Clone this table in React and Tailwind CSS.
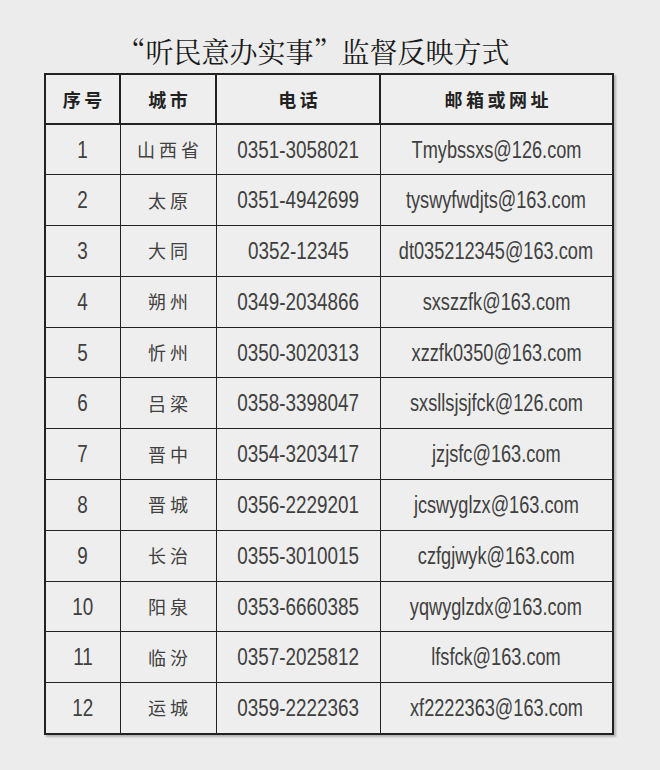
import React from "react";

const rows = [
  ["1", "山西省", "0351-3058021", "Tmybssxs@126.com"],
  ["2", "太原", "0351-4942699", "tyswyfwdjts@163.com"],
  ["3", "大同", "0352-12345", "dt035212345@163.com"],
  ["4", "朔州", "0349-2034866", "sxszzfk@163.com"],
  ["5", "忻州", "0350-3020313", "xzzfk0350@163.com"],
  ["6", "吕梁", "0358-3398047", "sxsllsjsjfck@126.com"],
  ["7", "晋中", "0354-3203417", "jzjsfc@163.com"],
  ["8", "晋城", "0356-2229201", "jcswyglzx@163.com"],
  ["9", "长治", "0355-3010015", "czfgjwyk@163.com"],
  ["10", "阳泉", "0353-6660385", "yqwyglzdx@163.com"],
  ["11", "临汾", "0357-2025812", "lfsfck@163.com"],
  ["12", "运城", "0359-2222363", "xf2222363@163.com"],
];

const sans = {
  fontFamily: '"Liberation Sans", Arial, sans-serif',
};
const cjk = {
  fontFamily: '"Noto Sans CJK SC", "Noto Sans", sans-serif',
};

function Narrow({ children, email }) {
  return (
    <div className="flex justify-center whitespace-nowrap">
      <span
        className={
          "inline-block text-[23px] leading-[28px] text-[#404040] " +
          (email ? "scale-x-[0.79]" : "scale-x-[0.82]")
        }
        style={sans}
      >
        {children}
      </span>
    </div>
  );
}

export default function App() {
  return (
    <div className="w-[660px] h-[770px] bg-[#ececec] overflow-hidden">
      <div className="pt-[35px] h-[73px] flex justify-center">
        <h1
          className="text-[28px] leading-[32px] text-[#1a1a1a] font-normal pr-[33px] whitespace-nowrap"
          style={{ fontFamily: '"Noto Serif CJK SC", "Noto Sans CJK SC", serif' }}
        >
          “听民意办实事”监督反映方式
        </h1>
      </div>
      <div className="pl-[44px]">
        <table className="border-collapse border-2 border-[#222] w-[570px] table-fixed bg-[#eeeeee] shadow-[2px_2px_2px_rgba(0,0,0,0.25)]">
          <colgroup>
            <col className="w-[75px]" />
            <col className="w-[96px]" />
            <col className="w-[164px]" />
            <col />
          </colgroup>
          <thead>
            <tr className="h-[50px]">
              {["序号", "城市", "电话", "邮箱或网址"].map((h) => (
                <th
                  key={h}
                  className="border-2 border-[#222] p-0 text-center align-middle text-[18px] font-bold text-[#222] tracking-[3.5px] indent-[3.5px]"
                  style={cjk}
                >
                  {h}
                </th>
              ))}
            </tr>
          </thead>
          <tbody>
            {rows.map((r) => (
              <tr key={r[0]} className="h-[50.8px]">
                <td className="border-[1.5px] border-[#222] p-0 text-center align-middle">
                  <Narrow>{r[0]}</Narrow>
                </td>
                <td
                  className="border-[1.5px] border-[#222] p-0 text-center align-middle text-[18px] text-[#404040] tracking-[4px] indent-[4px]"
                  style={cjk}
                >
                  {r[1]}
                </td>
                <td className="border-[1.5px] border-[#222] p-0 text-center align-middle">
                  <Narrow>{r[2]}</Narrow>
                </td>
                <td className="border-[1.5px] border-[#222] p-0 text-center align-middle">
                  <Narrow email>{r[3]}</Narrow>
                </td>
              </tr>
            ))}
          </tbody>
        </table>
      </div>
    </div>
  );
}
